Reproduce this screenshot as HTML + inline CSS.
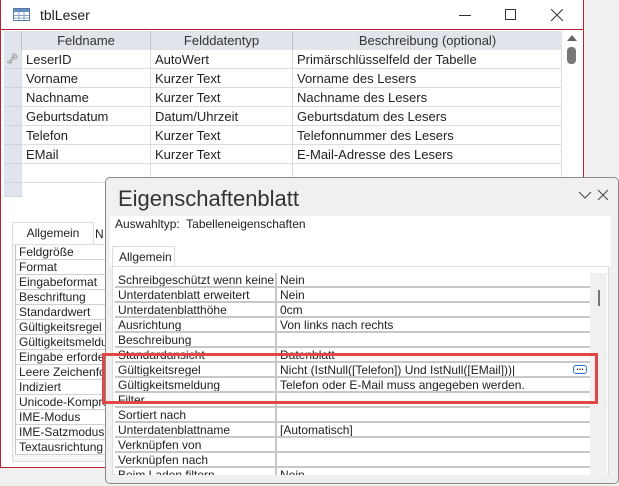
<!DOCTYPE html><html><head><meta charset="utf-8"><style>
*{margin:0;padding:0;box-sizing:border-box}
body{width:619px;height:486px;background:#f0f0f0;position:relative;overflow:hidden;font-family:"Segoe UI","Liberation Sans",sans-serif;color:#222}
.abs{position:absolute}
.win{left:0;top:0;width:584px;height:468px;background:#fff;border:1px solid #b52232;border-top:none}
.title{left:1px;top:0;width:582px;height:30px;background:#fff;border-bottom:1px solid #b52232}
.gh{background:#e1e4ea;color:#333;font-size:13px;text-align:center;height:19px;line-height:19px;border-right:1px solid #b9c1cc}
.cell{font-size:13px;height:19px;line-height:19px;padding-left:4px;border-bottom:1px solid #d6dde8;border-right:1px solid #d6dde8;white-space:nowrap;overflow:hidden}
.sel{background:#e1e4ea;border-bottom:1px solid #cdd5e0}
.lp{font-size:12px;height:15px;line-height:15px;padding-left:3px;border-bottom:1px solid #d0d0d0;white-space:nowrap;overflow:hidden}
.dlg{left:105px;top:177px;width:514px;height:307px;background:#f0f0f0;border:1px solid #8a8a8a;border-radius:5px}
.pr{font-size:12px;height:15px;line-height:14px;padding-left:3px;border-bottom:2px solid #c8c8c8;white-space:nowrap;overflow:hidden;background:#fff}
</style></head><body>
<div class="abs win"></div>
<div class="abs title"></div>
<svg class="abs" style="left:13px;top:8px" width="17" height="13"><rect x=".5" y=".5" width="16" height="12" fill="#fff" stroke="#5a7aa8"/><rect x="1" y="1" width="15" height="3" fill="#6b8cc0"/><path d="M1 7.5h15M1 10h15M6 4v8M11 4v8" stroke="#8aa4c8"/></svg>
<div class="abs" style="left:40px;top:7px;font-size:14px">tblLeser</div>
<div class="abs" style="left:459px;top:15px;width:12px;height:1px;background:#333"></div>
<div class="abs" style="left:505px;top:9px;width:11px;height:11px;border:1px solid #333"></div>
<svg class="abs" style="left:551px;top:9px" width="12" height="12"><path d="M0 0L12 12M12 0L0 12" stroke="#333"/></svg>
<div class="abs" style="left:4px;top:31px;width:558px">
<div style="display:flex"><div class="gh" style="width:18px"></div><div class="gh" style="width:129px">Feldname</div><div class="gh" style="width:142px">Felddatentyp</div><div class="gh" style="width:269px;border-right:none">Beschreibung (optional)</div></div>
</div>
<div class="abs" style="left:4px;top:50px">
<div style="display:flex"><div class="cell sel" style="width:18px;padding:0 0 0 2px;color:#777;font-size:10px">&#x1F5DD;</div><div class="cell" style="width:129px">LeserID</div><div class="cell" style="width:142px">AutoWert</div><div class="cell" style="width:269px">Primärschlüsselfeld der Tabelle</div></div>
<div style="display:flex"><div class="cell sel" style="width:18px"></div><div class="cell" style="width:129px">Vorname</div><div class="cell" style="width:142px">Kurzer Text</div><div class="cell" style="width:269px">Vorname des Lesers</div></div>
<div style="display:flex"><div class="cell sel" style="width:18px"></div><div class="cell" style="width:129px">Nachname</div><div class="cell" style="width:142px">Kurzer Text</div><div class="cell" style="width:269px">Nachname des Lesers</div></div>
<div style="display:flex"><div class="cell sel" style="width:18px"></div><div class="cell" style="width:129px">Geburtsdatum</div><div class="cell" style="width:142px">Datum/Uhrzeit</div><div class="cell" style="width:269px">Geburtsdatum des Lesers</div></div>
<div style="display:flex"><div class="cell sel" style="width:18px"></div><div class="cell" style="width:129px">Telefon</div><div class="cell" style="width:142px">Kurzer Text</div><div class="cell" style="width:269px">Telefonnummer des Lesers</div></div>
<div style="display:flex"><div class="cell sel" style="width:18px"></div><div class="cell" style="width:129px">EMail</div><div class="cell" style="width:142px">Kurzer Text</div><div class="cell" style="width:269px">E-Mail-Adresse des Lesers</div></div>
<div style="display:flex"><div class="cell sel" style="width:18px"></div><div class="cell" style="width:129px"></div><div class="cell" style="width:142px"></div><div class="cell" style="width:269px"></div></div>
<div style="display:flex"><div class="cell sel" style="width:18px;height:14px"></div></div>
</div>
<div class="abs" style="left:562px;top:31px;width:20px;height:146px;background:#fff"></div>
<div class="abs" style="left:567px;top:35px;width:0;height:0;border-left:5px solid transparent;border-right:5px solid transparent;border-bottom:6px solid #666"></div>
<div class="abs" style="left:567px;top:47px;width:9px;height:17px;background:#777;border-radius:4px"></div>
<div class="abs" style="left:12px;top:222px;width:82px;height:22px;background:#fff;border:1px solid #ddd;border-bottom:none;font-size:12px;text-align:center;line-height:20px">Allgemein</div>
<div class="abs" style="left:95px;top:227px;font-size:12px">N</div>
<div class="abs" style="left:12px;top:244px;width:100px;height:218px;background:#f7f7f7;border:1px solid #ddd"></div>
<div class="abs" style="left:15px;top:245px;width:100px;background:#fff;border-left:1px solid #c8c8c8">
<div class="lp">Feldgröße</div><div class="lp">Format</div><div class="lp">Eingabeformat</div><div class="lp">Beschriftung</div><div class="lp">Standardwert</div><div class="lp">Gültigkeitsregel</div><div class="lp">Gültigkeitsmeldung</div><div class="lp">Eingabe erforderlich</div><div class="lp">Leere Zeichenfolge</div><div class="lp">Indiziert</div><div class="lp">Unicode-Kompression</div><div class="lp">IME-Modus</div><div class="lp">IME-Satzmodus</div><div class="lp">Textausrichtung</div>
</div>
<div class="abs dlg"></div>
<div class="abs" style="left:118px;top:186px;font-size:22px;color:#333">Eigenschaftenblatt</div>
<svg class="abs" style="left:578px;top:189px" width="32" height="12"><path d="M1 3l6 6 6-6" fill="none" stroke="#444"/><path d="M20 1l10 10M30 1L20 11" stroke="#444"/></svg>
<div class="abs" style="left:110px;top:216px;width:501px;height:50px;background:#fff"></div>
<div class="abs" style="left:115px;top:217px;font-size:12px">Auswahltyp:&nbsp; Tabelleneigenschaften</div>
<div class="abs" style="left:112px;top:246px;width:63px;height:21px;background:#fff;border:1px solid #ddd;border-bottom:none;font-size:12px;line-height:20px;padding-left:6px">Allgemein</div>
<div class="abs" style="left:112px;top:266px;width:497px;height:209px;background:#fff;border:1px solid #ddd"></div>
<div class="abs" style="left:115px;top:273px;width:475px;height:202px;overflow:hidden">
<div style="display:flex"><div style="width:162px;border-right:2px solid #c8c8c8">
<div class="pr">Schreibgeschützt wenn keine Vorlage</div><div class="pr">Unterdatenblatt erweitert</div><div class="pr">Unterdatenblatthöhe</div><div class="pr">Ausrichtung</div><div class="pr">Beschreibung</div><div class="pr">Standardansicht</div><div class="pr">Gültigkeitsregel</div><div class="pr">Gültigkeitsmeldung</div><div class="pr">Filter</div><div class="pr">Sortiert nach</div><div class="pr">Unterdatenblattname</div><div class="pr">Verknüpfen von</div><div class="pr">Verknüpfen nach</div><div class="pr">Beim Laden filtern</div>
</div><div style="width:313px">
<div class="pr">Nein</div><div class="pr">Nein</div><div class="pr">0cm</div><div class="pr">Von links nach rechts</div><div class="pr"></div><div class="pr">Datenblatt</div><div class="pr">Nicht (IstNull([Telefon]) Und IstNull([EMail]))|</div><div class="pr">Telefon oder E-Mail muss angegeben werden.</div><div class="pr"></div><div class="pr"></div><div class="pr">[Automatisch]</div><div class="pr"></div><div class="pr"></div><div class="pr">Nein</div>
</div></div></div>
<div class="abs" style="left:573px;top:365px;width:14px;height:9px;border:1px solid #2a6fd0;border-radius:3px;font-size:9px;line-height:3px;text-align:center;font-weight:bold;background:#fff">...</div>
<div class="abs" style="left:590px;top:273px;width:17px;height:202px;background:#f0f0f0"></div>
<div class="abs" style="left:598px;top:290px;width:2px;height:16px;background:#777"></div>
<div class="abs" style="left:102px;top:353px;width:496px;height:51px;border:3px solid #e04848"></div>
</body></html>
